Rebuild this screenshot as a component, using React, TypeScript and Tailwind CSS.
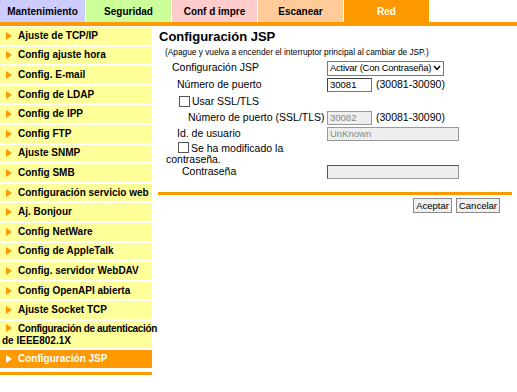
const tabs = [
  { label: "Mantenimiento", cls: "bg-[#ccccff] text-black" },
  { label: "Seguridad", cls: "bg-[#ccff99] text-black" },
  { label: "Conf d impre", cls: "bg-[#ffcccc] text-black" },
  { label: "Escanear", cls: "bg-[#ffcc99] text-black" },
  { label: "Red", cls: "bg-[#ff9900] text-white" },
];

const menu = [
  "Ajuste de TCP/IP",
  "Config ajuste hora",
  "Config. E-mail",
  "Config de LDAP",
  "Config de IPP",
  "Config FTP",
  "Ajuste SNMP",
  "Config SMB",
  "Configuración servicio web",
  "Aj. Bonjour",
  "Config NetWare",
  "Config de AppleTalk",
  "Config. servidor WebDAV",
  "Config OpenAPI abierta",
  "Ajuste Socket TCP",
];

function Arrow({ white }: { white?: boolean }) {
  return (
    <svg width="6" height="8" viewBox="0 0 6 8" className="inline-block mr-[6px] align-[0px]">
      <path d="M0 0 L6 4 L0 8 Z" fill={white ? "#ffffff" : "#ff9900"} />
    </svg>
  );
}

function Box() {
  return <span className="inline-block w-[11px] h-[11px] border border-[#555] bg-white mr-[2px] align-[-1px]" />;
}

export default function App() {
  return (
    <div className="w-[517px] h-[392px] bg-white font-['Liberation_Sans',Arial,sans-serif] text-[10.5px] text-black overflow-hidden">
      <div className="flex h-[22px] text-[10px]">
        {tabs.map((t) => (
          <div key={t.label} className={`w-[85px] mr-px flex items-center justify-center font-bold ${t.cls}`}>
            {t.label}
          </div>
        ))}
      </div>
      <div className="h-[4px] bg-[#ff9900]" />
      <div className="flex">
        <div className="w-[152px] pt-px text-[10px]">
          <div className="flex flex-col gap-[2px]">
            {menu.map((m) => (
              <div key={m} className="h-[17.6px] bg-[#ffff99] font-bold pl-[6px] flex items-center leading-none whitespace-nowrap">
                <Arrow />
                {m}
              </div>
            ))}
            <div className="h-[27px] bg-[#ffff99] font-bold pl-[2px] pt-[2px] leading-[12px] whitespace-nowrap">
              <span className="pl-[4px]">
                <Arrow />
              </span>
              <span className="tracking-[-0.35px]">Configuración de autenticación</span>
              <br />
              de IEEE802.1X
            </div>
            <div className="h-[17.6px] bg-[#ff9900] text-white font-bold pl-[6px] flex items-center leading-none">
              <Arrow white />
              Configuración JSP
            </div>
          </div>
          <div className="mt-[4px] h-[3px] bg-[#ff9900]" />
        </div>
        <div className="ml-[6px] w-[354px]">
          <div className="pt-[3px] pl-px text-[13px] font-bold leading-[16px]">Configuración JSP</div>
          <div className="pl-[7px] mt-[1px] text-[8.3px] leading-[12px] whitespace-nowrap">
            (Apague y vuelva a encender el interruptor principal al cambiar de JSP.)
          </div>
          <div className="flex items-center h-[16px] mt-[2px]">
            <div className="w-[169px] pl-[14px] whitespace-nowrap">Configuración JSP</div>
            <div className="w-[117px] h-[15px] border border-[#777] bg-white flex items-center justify-between pl-[2px] pr-[2px] text-[9.5px] whitespace-nowrap">
              <span className="tracking-[-0.25px]">Activar (Con Contraseña)</span>
              <svg width="8" height="6" viewBox="0 0 8 6" className="shrink-0">
                <path d="M1 1 L4 4.5 L7 1" stroke="#000" strokeWidth="1.4" fill="none" />
              </svg>
            </div>
          </div>
          <div className="flex items-center h-[16px] mt-px">
            <div className="w-[169px] pl-[19px] whitespace-nowrap">Número de puerto</div>
            <div className="w-[45px] h-[14px] border border-[#777] border-t-[#444] border-l-[#444] bg-white pl-[2px] leading-[12px] text-[9.5px]">
              30081
            </div>
            <div className="ml-[4px]">(30081-30090)</div>
          </div>
          <div className="flex items-center h-[17px] pl-[21px]">
            <Box />
            Usar SSL/TLS
          </div>
          <div className="flex items-center h-[16px]">
            <div className="w-[169px] pl-[30px] whitespace-nowrap">Número de puerto (SSL/TLS)</div>
            <div className="w-[45px] h-[14px] border border-[#999] bg-[#eeeeee] pl-[2px] leading-[12px] text-[9.5px] text-[#888]">
              30082
            </div>
            <div className="ml-[4px]">(30081-30090)</div>
          </div>
          <div className="flex items-center h-[15px]">
            <div className="w-[169px] pl-[19px]">Id. de usuario</div>
            <div className="w-[132px] h-[14px] border border-[#999] bg-[#eeeeee] pl-[2px] leading-[12px] text-[9.5px] text-[#888]">
              UnKnown
            </div>
          </div>
          <div className="h-[23px] leading-[11px] pl-[8px] pt-px">
            <span className="pl-[12px]">
              <Box />
            </span>
            Se ha modificado la
            <br />
            contraseña.
          </div>
          <div className="flex items-center h-[16px]">
            <div className="w-[169px] pl-[24px]">Contraseña</div>
            <div className="w-[132px] h-[14px] border border-[#999] border-t-[#555] border-l-[#555] bg-[#eeeeee]" />
          </div>
          <div className="mt-[12px] h-[3px] bg-[#ff9900]" />
          <div className="flex justify-end gap-[4px] mt-[3px] pr-[12px]">
            <button className="h-[15px] px-[2px] border border-[#888] bg-[#f0f0f0] text-[9.5px] leading-[13px]">Aceptar</button>
            <button className="h-[15px] px-[2px] border border-[#888] bg-[#f0f0f0] text-[9.5px] leading-[13px]">Cancelar</button>
          </div>
        </div>
      </div>
    </div>
  );
}
